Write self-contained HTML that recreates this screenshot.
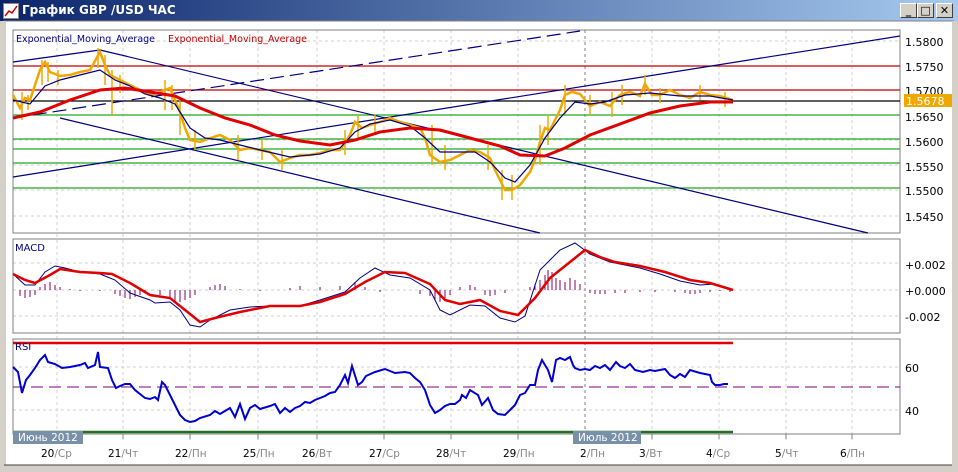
<!DOCTYPE html>
<html><head><meta charset="utf-8"><style>
body{margin:0;width:958px;height:472px;overflow:hidden;background:#d4d0c8;font-family:"DejaVu Sans",sans-serif}
#tb{position:absolute;left:0;top:0;width:958px;height:21px;background:linear-gradient(to right,#0a246a,#a6caf0)}
#tb span{position:absolute;left:22px;top:3px;color:#fff;font-weight:bold;font-size:12px;font-family:"DejaVu Sans",sans-serif}
#ic{position:absolute;left:3px;top:3px;width:14px;height:14px;background:#fff;border:1px solid #888}
.btn{position:absolute;top:3px;width:15px;height:13px;background:#d4d0c8;border:1px solid;border-color:#fff #404040 #404040 #fff;font-size:11px;line-height:13px;text-align:center;font-weight:bold}
svg{position:absolute;left:0;top:0}
</style></head><body>
<div id="tb"><div id="ic"><svg width="14" height="14"><polyline points="1,12 5,7 8,9 13,2" fill="none" stroke="#c00" stroke-width="1.5"/></svg></div><span>График GBP /USD  ЧАС</span>
<div class="btn" style="left:900px">_</div><div class="btn" style="left:917px">□</div><div class="btn" style="left:936px">✕</div></div>
<svg width="958" height="472" style="top:0" font-family="DejaVu Sans, sans-serif">
<rect x="4" y="21" width="950" height="446" fill="#fff" stroke="#808080"/>
<rect x="3" y="21" width="3" height="446" fill="#d4d0c8"/>
<rect x="952" y="21" width="6" height="451" fill="#d4d0c8"/>
<rect x="0" y="465" width="958" height="7" fill="#d4d0c8"/>
<line x1="4" y1="465" x2="952" y2="465" stroke="#404040"/>
<g stroke="#d0d0d0" stroke-dasharray="3,3">
<path d="M57 30V440M123 30V440M190 30V440M258 30V440M317 30V440M384 30V440M451 30V440M518 30V440M652 30V440M719 30V440M786 30V440M852 30V440M13 41H900M13 66H900M13 90H900M13 115H900M13 140H900M13 165H900M13 190H900M13 216H900M13 263H900M13 290H900M13 316H900M13 367H900M13 410H900"/>
</g>
<path d="M585 30V440" stroke="#808080" stroke-dasharray="3,3"/>
<g fill="none" stroke="#808080"><rect x="13" y="30" width="887" height="203"/><rect x="13" y="239" width="887" height="94"/><rect x="13" y="339" width="887" height="95"/></g>
<g stroke-width="1.2">
<line x1="13" y1="66" x2="900" y2="66" stroke="#c00000"/>
<line x1="13" y1="90" x2="900" y2="90" stroke="#c00000"/>
<line x1="13" y1="101" x2="900" y2="101" stroke="#000"/>
<g stroke="#22aa22"><line x1="13" y1="115" x2="900" y2="115"/><line x1="13" y1="139" x2="900" y2="139"/><line x1="13" y1="149" x2="900" y2="149"/><line x1="13" y1="163" x2="900" y2="163"/><line x1="13" y1="188" x2="900" y2="188"/></g>
<g stroke="#000080"><line x1="13" y1="62" x2="100" y2="50"/><line x1="100" y1="50" x2="868" y2="233"/><line x1="60" y1="118" x2="540" y2="233"/><line x1="13" y1="177" x2="900" y2="36"/><line x1="13" y1="118" x2="580" y2="31" stroke-dasharray="14,6"/></g>
</g>
<g stroke="#f0a800" stroke-width="1.5"><path d="M22 92v28M28 95v15M42 60v25M48 62v20M58 70v15M98 48v20M105 55v30M112 70v45M120 75v18M165 80v30M172 85v25M180 100v35M195 130v20M238 135v25M262 140v20M282 150v20M345 130v25M358 115v25M375 115v20M432 125v40M445 145v25M488 145v25M502 170v30M512 175v25M540 125v40M548 115v30M565 85v30M590 95v20M612 92v25M622 85v20M645 75v20M660 88v15M700 85v15M725 92v15"/></g>
<polyline fill="none" stroke="#f0a800" stroke-width="2.5" points="13,95 20,108 25,98 30,100 35,85 40,70 45,62 50,72 60,76 70,75 80,72 90,70 100,52 105,65 110,75 120,80 130,85 140,90 150,95 160,92 170,88 175,100 180,112 185,128 190,140 200,142 210,138 220,135 230,140 240,150 250,148 260,150 270,152 280,162 290,158 300,155 310,155 320,153 330,150 340,150 350,135 355,122 362,128 370,125 380,122 390,118 400,122 410,125 420,128 425,138 430,155 440,162 450,160 460,155 470,150 480,152 490,158 495,170 500,180 505,190 512,190 520,185 530,172 535,160 540,142 545,128 550,130 555,120 560,110 565,95 572,92 580,94 585,100 590,106 600,102 610,106 615,100 620,95 630,92 640,96 645,84 652,95 660,95 670,90 680,95 690,98 700,92 710,95 720,96 733,100"/>
<polyline fill="none" stroke="#000080" stroke-width="1.2" points="13,100 30,104 45,86 60,80 80,75 100,70 115,80 130,86 145,94 160,98 175,104 190,128 205,138 220,140 240,145 260,150 290,157 320,154 340,148 355,132 370,124 390,120 410,126 425,138 440,152 460,152 475,152 490,162 505,178 515,182 530,165 545,138 560,118 575,102 590,104 605,102 625,95 650,93 680,96 710,96 733,100"/>
<polyline fill="none" stroke="#e00000" stroke-width="3" points="13,118 40,112 70,100 100,90 125,88 150,92 175,96 200,108 225,118 250,125 275,135 300,141 330,145 355,140 380,132 410,128 440,130 470,138 500,146 520,155 545,156 565,148 590,135 620,124 650,113 680,106 710,102 733,102"/>
<text x="16" y="42" font-size="9.5" fill="#000080">Exponential_Moving_Average</text><text x="168" y="42" font-size="9.5" fill="#c00000">Exponential_Moving_Average</text>
<g font-size="11" fill="#000"><text x="905" y="46">1.5800</text><text x="905" y="71">1.5750</text><text x="905" y="95">1.5700</text><text x="905" y="121">1.5650</text><text x="905" y="146">1.5600</text><text x="905" y="171">1.5550</text><text x="905" y="195">1.5500</text><text x="905" y="221">1.5450</text></g>
<rect x="904" y="94" width="48" height="13" fill="#f0a800"/><text x="906" y="105" font-size="11" fill="#fff">1.5678</text>
<g stroke="#800060" stroke-width="1">
<path d="M20 290v6M25 290v8M30 290v7M35 290v5M40 290v-3M45 290v-6M50 290v-8M55 290v-5M60 290v-3M70 290v-1M80 290v1M100 290v1M115 290v4M120 290v6M125 290v8M130 290v9M135 290v7M140 290v5M145 290v3M160 290v5M170 290v8M175 290v11M180 290v12M185 290v10M190 290v8M195 290v5M210 290v-3M215 290v-5M220 290v-6M225 290v-4M240 290v-1M260 290v1M290 290v-2M300 290v-4M320 290v-3M340 290v-4M355 290v-8M365 290v-3M380 290v2M420 290v4M430 290v6M435 290v10M440 290v12M445 290v8M450 290v5M460 290v-3M470 290v-5M475 290v-3M485 290v5M490 290v6M495 290v5M505 290v3M530 290v-3M535 290v-6M540 290v-10M545 290v-15M548 290v-20M552 290v-18M556 290v-12M560 290v-10M565 290v-8M570 290v-12M575 290v-10M580 290v-6M590 290v3M595 290v4M600 290v4M605 290v4M615 290v3M625 290v3M640 290v2M655 290v2M675 290v2M685 290v3M690 290v4M695 290v4M700 290v3M710 290v2M720 290v1M730 290v2"/>
</g>
<polyline fill="none" stroke="#000080" stroke-width="1" points="13,274 25,285 35,285 45,272 55,266 65,268 80,272 100,274 115,280 130,293 150,300 155,303 170,302 180,310 190,325 200,327 210,320 230,310 250,307 270,306 300,306 320,300 345,292 360,278 375,268 390,275 410,278 430,290 440,310 450,315 470,305 485,306 500,318 515,322 525,316 540,270 560,250 575,243 590,254 610,262 620,264 640,268 660,274 680,281 700,285 715,284 733,290"/>
<polyline fill="none" stroke="#e00000" stroke-width="2.5" points="13,274 25,280 35,283 50,275 60,269 80,272 100,273 112,274 130,283 150,295 170,298 185,310 200,322 215,318 240,312 270,306 300,306 320,302 345,294 365,282 385,272 405,273 430,284 445,300 460,304 480,300 500,311 518,315 535,298 550,278 570,262 585,250 600,257 615,262 640,266 665,272 690,280 710,283 733,290"/>
<text x="15" y="251" font-size="10" fill="#000080">MACD</text>
<g font-size="11" fill="#000"><text x="905" y="269">+0.002</text><text x="905" y="295">+0.000</text><text x="905" y="321">-0.002</text></g>
<line x1="13" y1="343" x2="733" y2="343" stroke="#e00000" stroke-width="2.5"/>
<line x1="13" y1="432" x2="733" y2="432" stroke="#207020" stroke-width="2.5"/>
<line x1="13" y1="387" x2="900" y2="387" stroke="#800080" stroke-dasharray="12,6"/>
<polyline fill="none" stroke="#0000d0" stroke-width="2" points="13,367 18,372 22,393 26,380 30,375 35,368 40,360 45,355 48,362 55,364 62,368 70,367 80,365 85,363 88,368 95,365 98,352 100,367 108,368 112,380 116,388 120,386 125,384 130,384 135,390 145,398 150,399 155,397 158,400 162,382 165,385 170,395 175,405 180,415 185,420 190,422 195,421 200,418 210,415 215,411 220,414 225,411 230,408 235,417 240,404 245,419 250,408 255,405 260,409 270,406 275,404 280,413 285,408 290,412 295,408 300,406 305,402 310,403 315,400 320,398 325,396 330,393 335,392 340,385 345,375 348,383 352,366 358,385 362,382 366,376 375,372 385,369 395,373 405,372 410,373 415,378 420,382 425,390 430,405 435,413 440,410 445,406 450,404 455,404 460,400 462,395 466,398 470,390 478,395 482,405 488,398 493,410 498,414 505,415 510,410 515,405 520,395 525,393 530,385 535,385 538,370 542,360 548,370 552,382 556,360 560,358 565,360 570,357 573,365 575,368 580,370 585,369 590,370 595,366 600,368 605,365 610,370 616,362 620,366 625,368 630,364 635,370 643,372 650,370 655,371 665,369 670,375 675,378 680,374 685,377 690,370 700,373 710,375 712,382 715,385 720,385 724,384 728,384"/>
<text x="15" y="350" font-size="10" fill="#000080">RSI</text>
<g font-size="11" fill="#000"><text x="905" y="372">60</text><text x="905" y="415">40</text></g>
<rect x="13" y="431" width="70" height="13" fill="#7890a8"/><text x="18" y="441" font-size="10.5" fill="#fff">Июнь 2012</text>
<rect x="573" y="431" width="68" height="13" fill="#7890a8"/><text x="578" y="441" font-size="10.5" fill="#fff">Июль 2012</text>
<g stroke="#808080"><path d="M123 434v5M190 434v5M258 434v5M317 434v5M384 434v5M451 434v5M518 434v5M652 434v5M719 434v5M786 434v5M852 434v5"/></g>
<g font-size="10.5" fill="#000">
<text x="41" y="457">20<tspan fill="#888">/Ср</tspan></text><text x="108" y="457">21<tspan fill="#888">/Чт</tspan></text><text x="175" y="457">22<tspan fill="#888">/Пн</tspan></text><text x="243" y="457">25<tspan fill="#888">/Пн</tspan></text><text x="302" y="457">26<tspan fill="#888">/Вт</tspan></text><text x="369" y="457">27<tspan fill="#888">/Ср</tspan></text><text x="436" y="457">28<tspan fill="#888">/Чт</tspan></text><text x="503" y="457">29<tspan fill="#888">/Пн</tspan></text><text x="580" y="457">2<tspan fill="#888">/Пн</tspan></text><text x="639" y="457">3<tspan fill="#888">/Вт</tspan></text><text x="706" y="457">4<tspan fill="#888">/Ср</tspan></text><text x="775" y="457">5<tspan fill="#888">/Чт</tspan></text><text x="840" y="457">6<tspan fill="#888">/Пн</tspan></text>
</g>
</svg>
</body></html>
